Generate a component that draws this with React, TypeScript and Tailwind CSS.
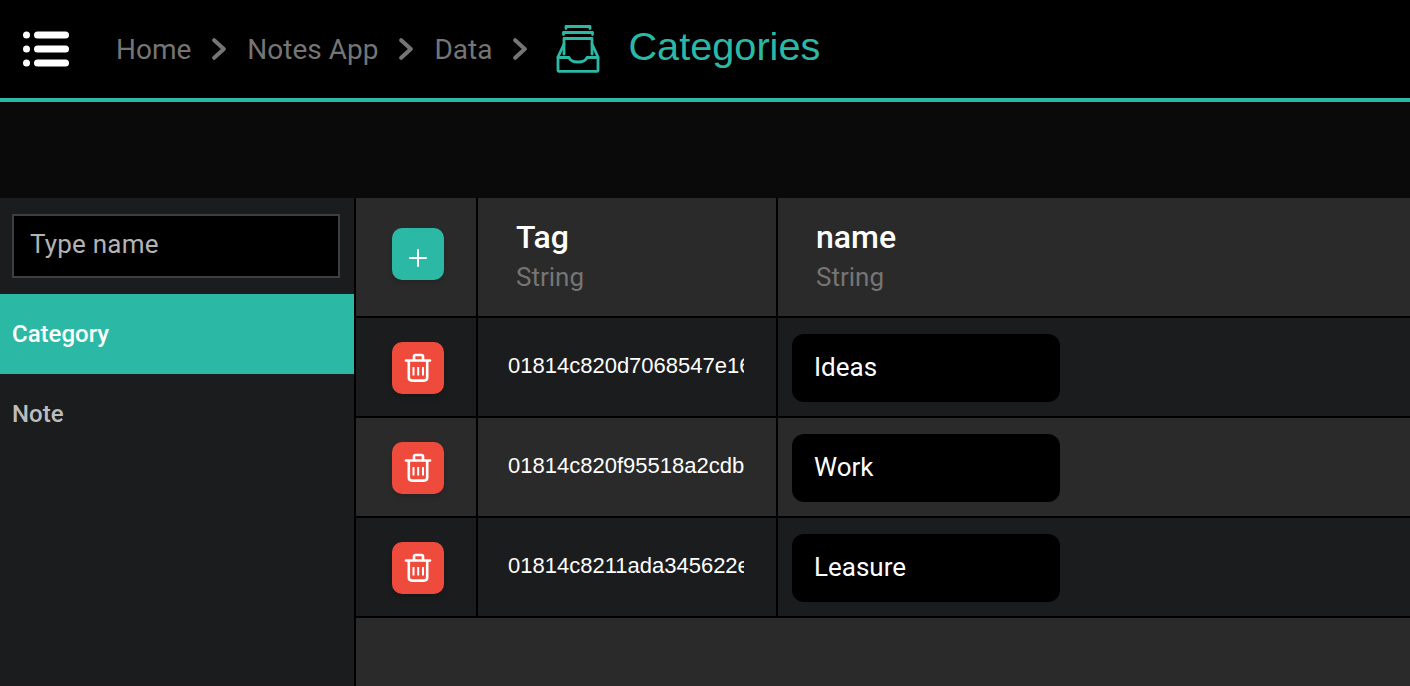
const rows = [
  { id: "01814c820d7068547e16f3a9", name: "Ideas" },
  { id: "01814c820f95518a2cdb7e10", name: "Work" },
  { id: "01814c8211ada345622e9b04", name: "Leasure" },
];

function MenuIcon() {
  return (
    <svg width="48" height="42" viewBox="0 0 48 42" fill="#fff">
      <circle cx="4.5" cy="7" r="3.5" />
      <circle cx="4.5" cy="21" r="3.5" />
      <circle cx="4.5" cy="35" r="3.5" />
      <rect x="12" y="3.5" width="35" height="7" rx="3.5" />
      <rect x="12" y="17.5" width="35" height="7" rx="3.5" />
      <rect x="12" y="31.5" width="35" height="7" rx="3.5" />
    </svg>
  );
}

function Chevron() {
  return (
    <svg width="14" height="22" viewBox="0 0 14 22" fill="none" stroke="#757575" strokeWidth="4" className="mx-[21px]">
      <path d="M2.2 2.2 L11.8 11 L2.2 19.8" strokeLinecap="round" strokeLinejoin="round" />
    </svg>
  );
}

function TrayIcon() {
  return (
    <svg width="44" height="50" viewBox="0 0 44 50" fill="none" stroke="#2bb9a5" strokeWidth="2.8" strokeLinejoin="round" strokeLinecap="round">
      <path d="M10 4.5 V2.5 H34 V4.5" />
      <path d="M7.5 10.5 V8.5 H36.5 V10.5" />
      <path d="M8 30 V14.5 H36 V30" />
      <path d="M8 20 L2 33 V46.4 C2 47 2.4 47.4 3 47.4 H41 C41.6 47.4 42 47 42 46.4 V33 L36 20" />
      <path d="M2 33.5 H13 C14 36.6 16.5 38 22 38 C27.5 38 30 36.6 31 33.5 H42" />
    </svg>
  );
}

function TrashIcon() {
  return (
    <svg width="28" height="30" viewBox="0 0 28 30" fill="none" stroke="#fff" strokeWidth="2.6" strokeLinecap="round" strokeLinejoin="round">
      <path d="M2 7.5 H26" />
      <path d="M10 7 V3.5 C10 2.5 10.5 2 11.5 2 H17.5 C18.5 2 19 2.5 19 3.5 V7" />
      <path d="M4.8 8 V24.5 C4.8 26.5 6 27.6 8 27.6 H20 C22 27.6 23.2 26.5 23.2 24.5 V8" />
      <path d="M9.5 14 V22.5 M14.2 14 V22.5 M19 14 V22.5" strokeWidth="2" strokeLinecap="butt" />
    </svg>
  );
}

export default function App() {
  return (
    <div className="flex h-[686px] w-[1410px] flex-col overflow-hidden bg-[#0a0a0a] font-['Roboto',sans-serif]">
      <header className="flex h-[102px] shrink-0 items-center border-b-4 border-[#2bb9a5] bg-black pb-[1px]">
        <div className="ml-[22px] mr-[46px] flex">
          <MenuIcon />
        </div>
        <span className="mt-[2px] text-[28px] text-[#757575]">Home</span>
        <Chevron />
        <span className="mt-[2px] text-[28px] text-[#757575]">Notes App</span>
        <Chevron />
        <span className="mt-[2px] text-[28px] text-[#757575]">Data</span>
        <Chevron />
        <div className="ml-[8px] mr-[28px] flex">
          <TrayIcon />
        </div>
        <span className="mb-[3px] font-['Liberation_Sans',sans-serif] text-[39.7px] text-[#2bb9a5]">Categories</span>
      </header>

      <div className="mt-[96px] flex min-h-0 flex-1">
        <aside className="w-[356px] shrink-0 border-r-2 border-black bg-[#1b1c1e]">
          <div className="px-3 pb-4 pt-4">
            <div className="flex h-16 w-[328px] items-center border-2 border-[#3f3f3f] bg-black pb-[4px] pl-4 text-[26px] tracking-[0.2px] text-[#b3b3b3]">
              Type name
            </div>
          </div>
          <div className="flex h-20 items-center bg-[#2bb9a5] pl-3 text-[24px] font-medium text-white">Category</div>
          <div className="flex h-20 items-center pl-3 text-[24px] font-medium text-[#bdbdbd]">Note</div>
        </aside>

        <main className="min-w-0 flex-1 bg-[#2a2a2a]">
          <div className="flex h-[120px] border-b-2 border-black">
            <div className="flex w-[122px] shrink-0 items-center justify-center border-r-2 border-black pb-[6px] pl-[4px]">
              <button className="flex h-[52px] w-[52px] items-center justify-center rounded-[10px] bg-[#2bb9a5] pt-2 shadow-md">
                <svg width="20" height="20" viewBox="0 0 20 20" stroke="#fff" strokeWidth="2" strokeLinecap="round">
                  <path d="M10 2 V18 M2 10 H18" />
                </svg>
              </button>
            </div>
            <div className="w-[300px] shrink-0 border-r-2 border-black pl-[38px] pt-[20px]">
              <div className="text-[32px] font-medium leading-[38px] text-white">Tag</div>
              <div className="text-[26px] leading-[42px] text-[#757575]">String</div>
            </div>
            <div className="flex-1 pl-[38px] pt-[20px]">
              <div className="text-[32px] font-medium leading-[38px] text-white">name</div>
              <div className="text-[26px] leading-[42px] text-[#757575]">String</div>
            </div>
          </div>

          {rows.map((row, i) => (
            <div key={row.id} className={`flex h-[100px] border-b-2 border-black ${i % 2 === 0 ? "bg-[#1b1c1e]" : "bg-[#2a2a2a]"}`}>
              <div className="flex w-[122px] shrink-0 items-center justify-center border-r-2 border-black pl-[4px] pt-[2px]">
                <button className="flex h-[52px] w-[52px] items-center justify-center rounded-[10px] bg-[#ee4b3d] shadow-md">
                  <TrashIcon />
                </button>
              </div>
              <div className="flex w-[300px] shrink-0 items-center border-r-2 border-black pl-[30px]">
                <div className="mb-[4px] w-[236px] overflow-hidden whitespace-nowrap font-['Liberation_Sans',sans-serif] text-[22px] text-white">
                  {row.id}
                </div>
              </div>
              <div className="flex flex-1 items-center pl-[14px] pt-[2px]">
                <div className="flex h-[68px] w-[268px] items-center rounded-xl bg-black pb-[2px] pl-[22px] text-[26px] text-white">
                  {row.name}
                </div>
              </div>
            </div>
          ))}
        </main>
      </div>
    </div>
  );
}
